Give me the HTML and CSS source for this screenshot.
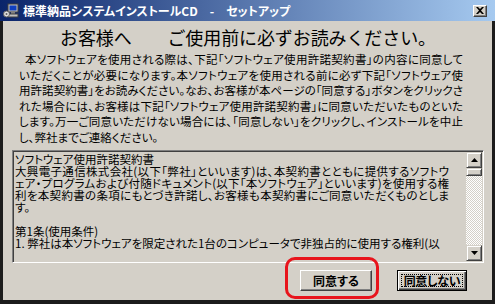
FILE: index.html
```html
<!DOCTYPE html>
<html lang="ja">

<head>
    <meta charset="UTF-8">
    <meta name="viewport" content="width=device-width, initial-scale=1.0">
    <title>標準納品システムインストールCD - セットアップ</title>
    <link rel="stylesheet" href="styles.css">
</head>

<body>
    <div class="window">
        <div class="titlebar">
            <svg class="app-icon" width="16" height="16" viewBox="0 0 16 16">
                <rect x="5" y="1" width="10" height="8" fill="#c0c0c0" stroke="#404040" stroke-width="1"/>
                <rect x="6.5" y="2.5" width="7" height="5" fill="#1040c0"/>
                <rect x="8" y="9" width="4" height="2" fill="#808080"/>
                <rect x="5" y="11" width="10" height="3" fill="#c0c0c0" stroke="#404040" stroke-width="1"/>
                <circle cx="3.5" cy="11" r="3" fill="#e0e0e0" stroke="#606060" stroke-width="1"/>
                <circle cx="3.5" cy="11" r="1" fill="#606060"/>
            </svg>
            <span class="title">標準納品システムインストールCD　-　セットアップ</span>
            <span class="close-btn">
                <svg width="8" height="7" viewBox="0 0 8 7">
                    <path d="M0 0 L2 0 L4 2 L6 0 L8 0 L5 3.5 L8 7 L6 7 L4 5 L2 7 L0 7 L3 3.5 Z" fill="#000"/>
                </svg>
            </span>
        </div>

        <div class="content">
            <h1 class="heading">お客様へ　　ご使用前に必ずお読みください。</h1>

            <p class="notice">
                <span class="line indent">本ソフトウェアを使用される際は、下記「ソフトウェア使用許諾契約書」の内容に同意して</span>
                <span class="line">いただくことが必要になります。本ソフトウェアを使用される前に必ず下記「ソフトウェア使</span>
                <span class="line">用許諾契約書」をお読みください。なお、お客様が本ページの「同意する」ボタンをクリックさ</span>
                <span class="line">れた場合には、お客様は下記「ソフトウェア使用許諾契約書」に同意いただいたものといた</span>
                <span class="line">します。万一ご同意いただけない場合には、「同意しない」をクリックし、インストールを中止</span>
                <span class="line last">し、弊社までご連絡ください。</span>
            </p>

            <div class="license">
                <div class="license-text">
                    <span class="line last">ソフトウェア使用許諾契約書</span>
                    <span class="line">大興電子通信株式会社(以下「弊社」といいます)は、本契約書とともに提供するソフトウ</span>
                    <span class="line">ェア・プログラムおよび付随ドキュメント(以下「本ソフトウェア」といいます)を使用する権</span>
                    <span class="line">利を本契約書の条項にもとづき許諾し、お客様も本契約書にご同意いただくものとしま</span>
                    <span class="line last">す。</span>
                    <span class="line last">&nbsp;</span>
                    <span class="line last">第1条(使用条件)</span>
                    <span class="line last">1. 弊社は本ソフトウェアを限定された1台のコンピュータで非独占的に使用する権利(以</span>
                </div>
                <div class="scrollbar">
                    <span class="scroll-btn">
                        <svg width="7" height="4" viewBox="0 0 7 4"><path d="M3.5 0 L7 4 L0 4 Z" fill="#000"/></svg>
                    </span>
                    <span class="scroll-thumb"></span>
                    <span class="scroll-track"></span>
                    <span class="scroll-btn">
                        <svg width="7" height="4" viewBox="0 0 7 4"><path d="M0 0 L7 0 L3.5 4 Z" fill="#000"/></svg>
                    </span>
                </div>
            </div>

            <div class="buttons">
                <span class="marked">
                    <button class="btn" type="button">同意する</button>
                </span>
                <button class="btn default" type="button"><span class="focus">同意しない</span></button>
            </div>
        </div>
    </div>
</body>

</html>
```

FILE: styles.css
```css
* {
    box-sizing: border-box;
}

body {
    margin: 0;
    background: #d4d0c8;
    font-family: "Noto Sans CJK JP", "Noto Sans", sans-serif;
    color: #000;
}

.window {
    width: 495px;
    height: 304px;
    display: flex;
    flex-direction: column;
    background: #d4d0c8;
    overflow: hidden;
}

.titlebar {
    height: 21px;
    flex: none;
    display: flex;
    align-items: center;
    padding: 0 8px 0 3px;
    background: linear-gradient(to right, #0a246a, #a6caf0);
}

.app-icon {
    flex: none;
}

.title {
    margin-left: 4px;
    flex: 1;
    color: #fff;
    font-size: 12px;
    font-weight: bold;
    line-height: 21px;
    white-space: nowrap;
    font-feature-settings: "palt";
}

.close-btn {
    width: 14px;
    height: 12px;
    display: flex;
    align-items: center;
    justify-content: center;
    background: #d4d0c8;
    border: 1px solid;
    border-color: #fff #404040 #404040 #fff;
    box-shadow: inset -1px -1px 0 #808080;
}

.content {
    flex: 1;
    display: flex;
    flex-direction: column;
    border-left: 3px solid #1c1c1c;
    border-right: 3px solid #1c1c1c;
    border-bottom: 4px solid #1c1c1c;
    padding: 4px 8px 0 9px;
}

.heading {
    margin: 0;
    font-size: 18px;
    font-weight: normal;
    line-height: 24px;
    text-align: center;
    letter-spacing: -0.1px;
}

.notice {
    margin: 3px 0 0 7px;
    width: 444px;
    font-size: 11.5px;
    line-height: 15.6px;
    font-feature-settings: "palt";
}

.line {
    display: block;
    text-align: justify;
    text-align-last: justify;
}

.line.last {
    text-align-last: left;
}

.indent {
    padding-left: 6px;
}

.license {
    margin-top: 4px;
    height: 113px;
    flex: none;
    display: flex;
    border: 1px solid;
    border-color: #808080 #fff #fff #808080;
    box-shadow: inset 1px 1px 0 #404040, inset -1px -1px 0 #d4d0c8;
    padding: 1px;
}

.license-text {
    flex: 1;
    padding: 1px 0 0 1px;
    font-size: 11.5px;
    line-height: 12px;
    overflow: hidden;
    font-feature-settings: "palt";
}

.license-text .line {
    width: 434px;
}

.scrollbar {
    width: 16px;
    display: flex;
    flex-direction: column;
}

.scroll-btn,
.scroll-thumb {
    height: 16px;
    display: flex;
    align-items: center;
    justify-content: center;
    background: #d4d0c8;
    border: 1px solid;
    border-color: #d4d0c8 #404040 #404040 #d4d0c8;
    box-shadow: inset 1px 1px 0 #fff, inset -1px -1px 0 #808080;
}

.scroll-thumb {
    height: 8px;
}

.scroll-track {
    flex: 1;
    background: repeating-conic-gradient(#fff 0 25%, #d4d0c8 0 50%) 0 0 / 2px 2px;
}

.buttons {
    display: flex;
    justify-content: flex-end;
    gap: 25px;
    padding: 7px 17px 0 0;
}

.marked {
    position: relative;
    display: flex;
}

.marked::after {
    content: "";
    position: absolute;
    left: -15px;
    right: -7px;
    top: -13px;
    bottom: -8px;
    border: 3px solid #e8141c;
    border-radius: 10px;
}

.btn {
    width: 72px;
    height: 21px;
    padding: 0;
    font-family: inherit;
    font-size: 12px;
    font-weight: bold;
    font-feature-settings: "palt";
    white-space: nowrap;
    background: #d4d0c8;
    border: 1px solid;
    border-color: #fff #404040 #404040 #fff;
    box-shadow: inset -1px -1px 0 #808080;
    color: #000;
}

.btn.default {
    width: 70px;
    border: 1px solid #000;
    box-shadow: inset 1px 1px 0 #fff, inset -1px -1px 0 #404040, inset -2px -2px 0 #808080;
    padding: 3px;
}

.focus {
    display: block;
    height: 100%;
    line-height: 11px;
    letter-spacing: -0.3px;
    border: 1px dotted #000;
}
```
